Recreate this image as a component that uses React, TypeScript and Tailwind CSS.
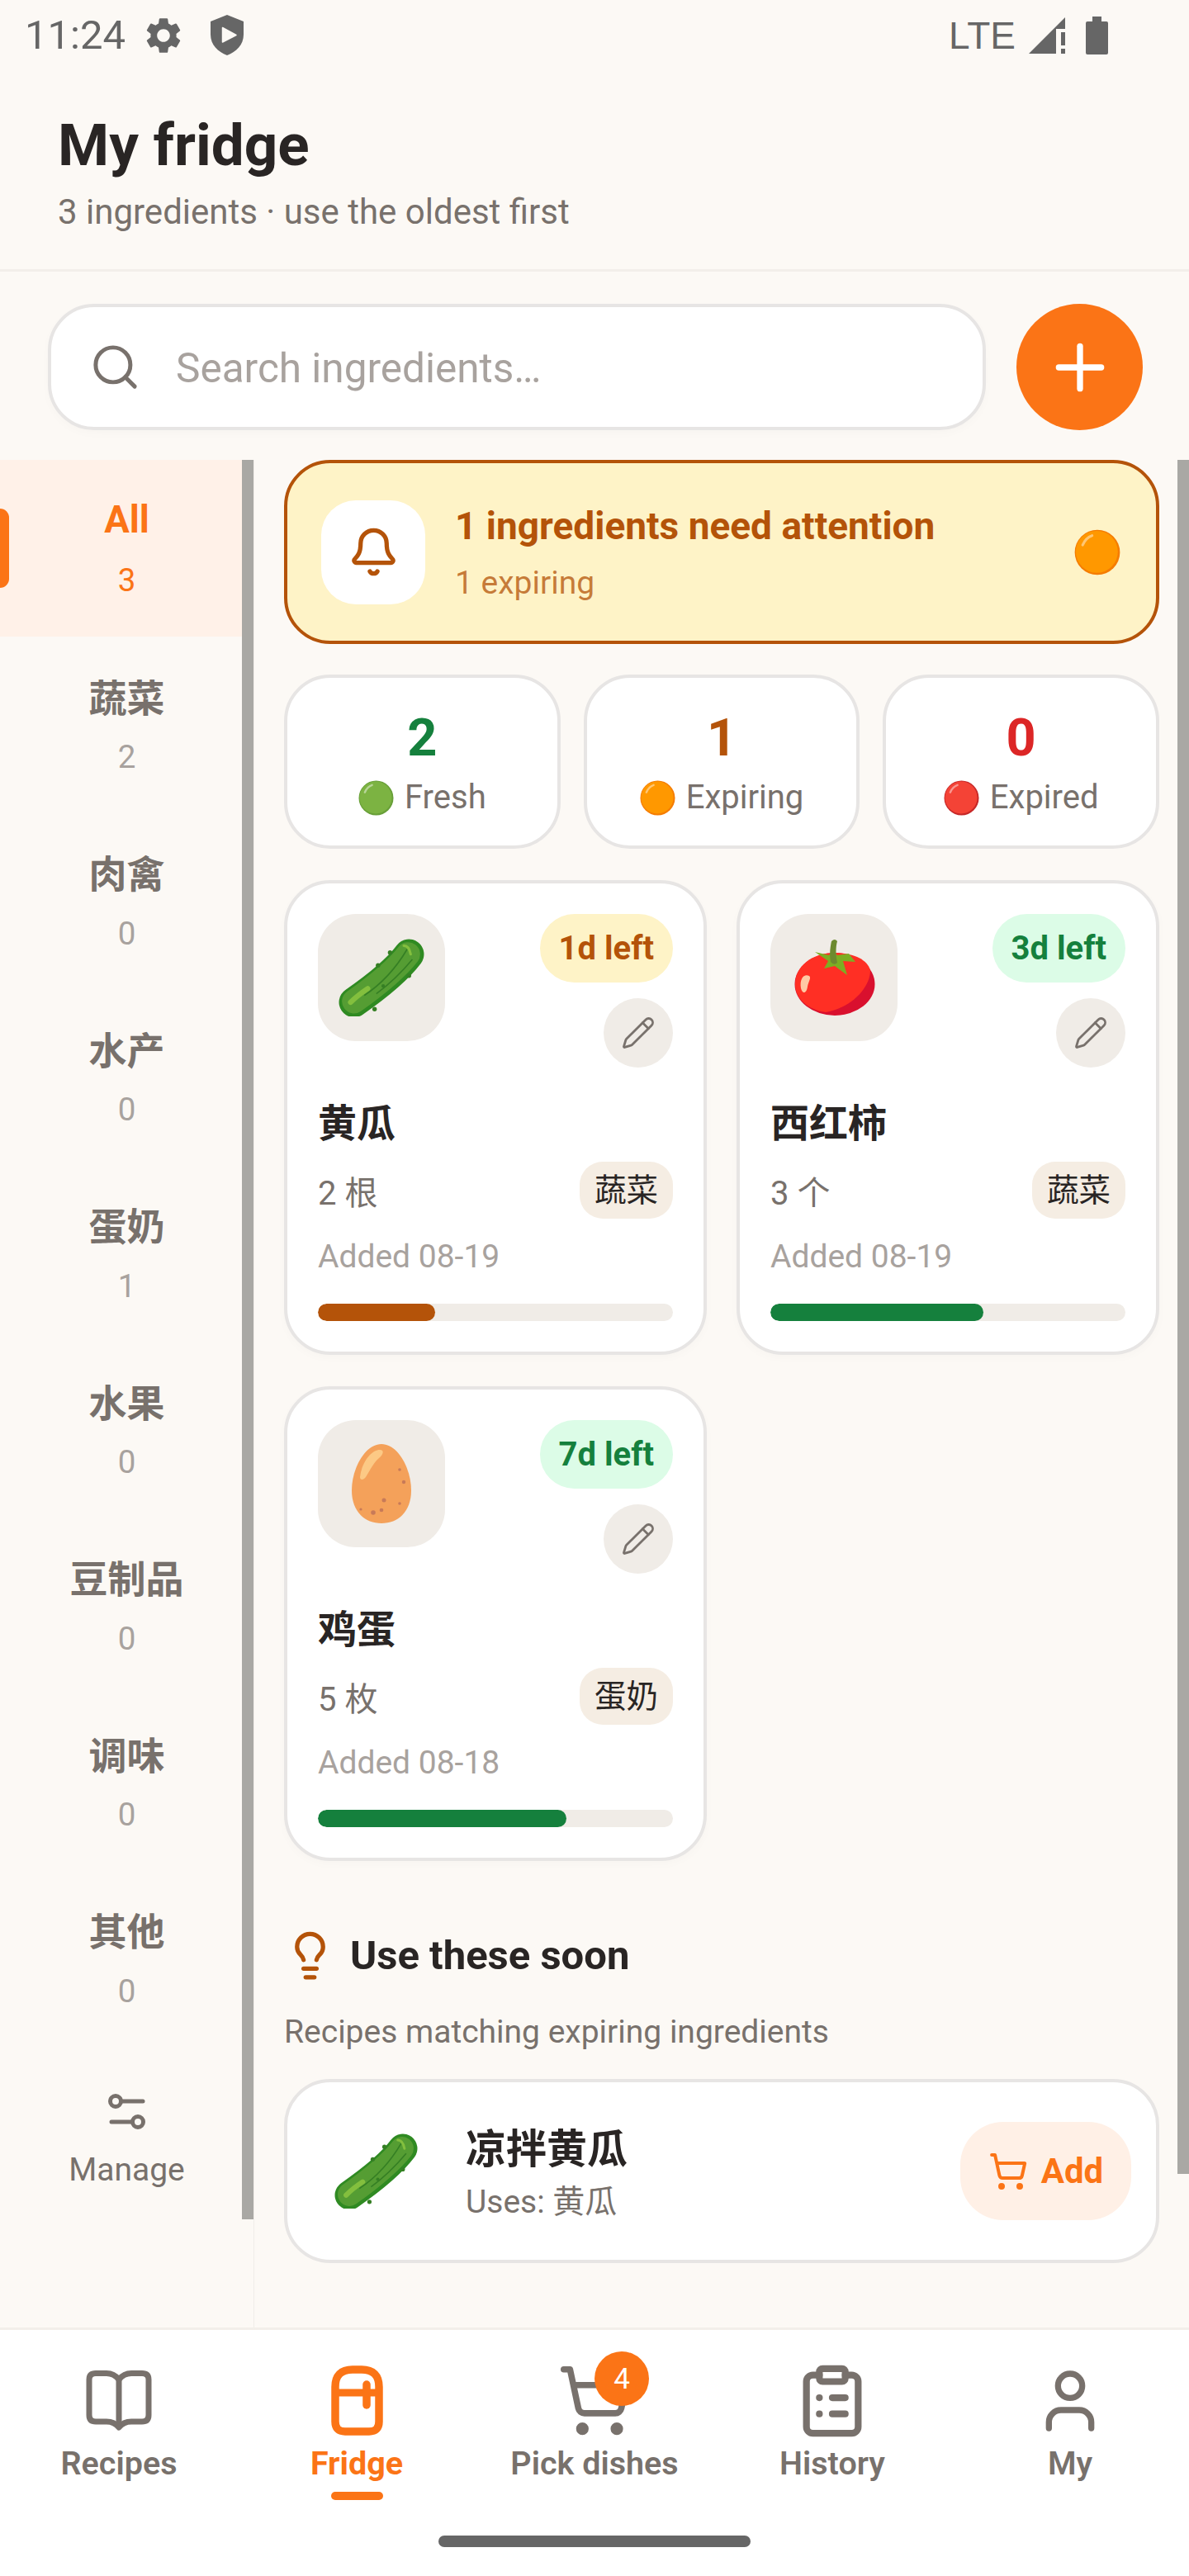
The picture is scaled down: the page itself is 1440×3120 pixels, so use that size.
import React from "react";
import { Search, Plus, Bell, Pencil, Lightbulb, ShoppingCart, ClipboardList, User } from "lucide-react";

const Dot = ({ c, rim, size }: { c: string; rim: string; size: number }) => (
  <svg width={size} height={size} viewBox="0 0 44 44" className="shrink-0">
    <circle cx="22" cy="22" r="21.5" fill={rim} />
    <circle cx="21.5" cy="21.5" r="20" fill={c} />
    <path d="M8 15 Q11 8 17 6" stroke="#ffffff" strokeOpacity="0.45" strokeWidth="2.5" fill="none" strokeLinecap="round" />
  </svg>
);

const Cucumber = ({ w }: { w: number }) => (
  <svg width={w} height={w * 0.91} viewBox="0 0 100 91">
    <path d="M18 74 Q64 42 82 18" stroke="#2f8a22" strokeWidth="35" strokeLinecap="round" fill="none" />
    <path d="M18 73 Q63 41 81 18" stroke="#559d33" strokeWidth="28" strokeLinecap="round" fill="none" />
    <path d="M30 66 Q60 46 80 12" stroke="#357f24" strokeWidth="1.6" fill="none" />
    <path d="M44 64 Q66 48 86 24" stroke="#357f24" strokeWidth="1.6" fill="none" />
    <path d="M14 74 Q22 66 34 58" stroke="#83bf3e" strokeWidth="6" strokeLinecap="round" fill="none" />
    <path d="M76 8 Q82 8 84 18" stroke="#83bf3e" strokeWidth="3" strokeLinecap="round" fill="none" />
    <circle cx="60" cy="16" r="2.6" fill="#357f24" />
    <circle cx="46" cy="31" r="2.6" fill="#357f24" />
    <circle cx="82" cy="43" r="2.6" fill="#357f24" />
    <circle cx="42" cy="82" r="2.6" fill="#357f24" />
    <circle cx="52" cy="55" r="2" fill="#357f24" />
  </svg>
);

const Tomato = () => (
  <svg width="98" height="94" viewBox="0 0 98 94" className="ml-[2px]">
    <ellipse cx="49" cy="55" rx="48.5" ry="38" fill="#d9102e" />
    <path d="M1 55 C1 33 22 17 49 17 C70 17 88 24 92 38 C92 60 68 84 38 89 C16 86 1 72 1 55 Z" fill="#ff2f24" />
    <path d="M8 60 C6 48 12 42 18 45 C21 47 17 52 16 58 C15 66 10 68 8 60 Z" fill="#ffc9a4" />
    <path d="M25 16 L42 20 L46 14 L52 20 L66 18 L74 28 L59 27 L64 44 L49 33 L36 36 L41 27 Z" fill="#7cae23" />
    <path d="M44 28 C42 18 44 8 45 3 Q49 -1 52 3 C50 10 50 20 52 29 Q48 33 44 28 Z" fill="#6d8a2f" />
  </svg>
);

const Egg = () => (
  <svg width="72" height="96" viewBox="0 0 72 96">
    <path d="M36 0 C56 0 72 30 72 56 C72 82 56 96 36 96 C16 96 0 82 0 56 C0 30 16 0 36 0 Z" fill="#f4a15a" />
    <path d="M10 40 C12 22 24 7 34 7 C40 7 38 13 33 17 C26 23 22 32 17 40 C14 44 10 44 10 40 Z" fill="#fcc985" />
    <g fill="#c87a58">
      <circle cx="58" cy="31" r="1.8" />
      <circle cx="63" cy="46" r="2.2" />
      <circle cx="39" cy="68" r="2.5" />
      <circle cx="58" cy="72" r="1.8" />
      <circle cx="36" cy="80" r="2.3" />
      <circle cx="26" cy="83" r="2.8" />
      <circle cx="11" cy="79" r="1.6" />
    </g>
  </svg>
);

const Cards = [
  { icon: <Cucumber w={104} />, left: "1d left", badge: "bg-[#fef3c7] text-[#b45309]", name: "黄瓜", qty: "2 根", tag: "蔬菜", date: "Added 08-19", bar: "w-[33%] bg-[#b45309]" },
  { icon: <Tomato />, left: "3d left", badge: "bg-[#dcfce7] text-[#15803d]", name: "西红柿", qty: "3 个", tag: "蔬菜", date: "Added 08-19", bar: "w-[60%] bg-[#15803d]" },
  { icon: <Egg />, left: "7d left", badge: "bg-[#dcfce7] text-[#15803d]", name: "鸡蛋", qty: "5 枚", tag: "蛋奶", date: "Added 08-18", bar: "w-[70%] bg-[#15803d]" },
];

const cats: [string, number][] = [
  ["蔬菜", 2], ["肉禽", 0], ["水产", 0], ["蛋奶", 1], ["水果", 0], ["豆制品", 0], ["调味", 0], ["其他", 0],
];

function FoodCard({ c }: { c: (typeof Cards)[number] }) {
  return (
    <div className="h-[575px] rounded-[56px] border-[4px] border-[#e7e5e4] bg-white px-[37px] pt-[37px] shadow-[0_4px_12px_rgba(0,0,0,0.02)]">
      <div className="flex justify-between">
        <div className="flex h-[154px] w-[154px] items-center justify-center rounded-[46px] bg-[#f0ece7]">{c.icon}</div>
        <div className="flex flex-col items-end">
          <div className={`flex h-[83px] items-center rounded-full px-[23px] text-[40px] font-bold ${c.badge}`}>{c.left}</div>
          <div className="mt-[19px] flex h-[84px] w-[84px] items-center justify-center rounded-full bg-[#f0ece7]">
            <Pencil size={42} strokeWidth={1.6} color="#78716c" />
          </div>
        </div>
      </div>
      <div className="mt-[32px] flex h-[70px] items-center text-[47px] font-bold leading-none text-[#292524]">{c.name}</div>
      <div className="mt-[12px] flex h-[69px] items-center justify-between">
        <span className="pt-[8px] text-[40px] text-[#78716c]">{c.qty}</span>
        <span className="flex h-[69px] items-center rounded-[28px] bg-[#f5ede3] px-[18px] text-[38.5px] text-[#292524]">{c.tag}</span>
      </div>
      <div className="mt-[21px] flex h-[50px] items-center text-[39px] text-[#a8a29e]">{c.date}</div>
      <div className="mt-[32px] h-[21px] overflow-hidden rounded-full bg-[#f0ece7]">
        <div className={`h-full rounded-full ${c.bar}`} />
      </div>
    </div>
  );
}

function Stat({ n, color, dot, rim, label }: { n: string; color: string; dot: string; rim: string; label: string }) {
  return (
    <div className="flex h-[211px] flex-col items-center rounded-[56px] border-[4px] border-[#e7e5e4] bg-white pt-[37px]">
      <div className={`flex h-[70px] items-center text-[63px] font-bold leading-none ${color}`}>{n}</div>
      <div className="mt-[10px] flex h-[56px] items-center gap-[13px] text-[40px] text-[#78716c]">
        <Dot c={dot} rim={rim} size={43} />
        <span>{label}</span>
      </div>
    </div>
  );
}

function NavItem({ label, active, children }: { label: string; active?: boolean; children: React.ReactNode }) {
  return (
    <div className="flex flex-col items-center">
      <div className="relative flex h-[95px] w-full items-center justify-center">{children}</div>
      <div className={`mt-[4px] flex h-[50px] items-center text-[39.5px] ${active ? "font-bold text-[#fb7416]" : "font-semibold text-[#78716c]"}`}>{label}</div>
      {active && <div className="mt-[9px] h-[10px] w-[63px] rounded-full bg-[#fb7416]" />}
    </div>
  );
}

export default function App() {
  return (
    <div
      className="flex h-[3120px] w-[1440px] flex-col overflow-hidden bg-[#fcf9f5] text-[#292524]"
      style={{ fontFamily: 'Roboto, "Noto Sans CJK SC", sans-serif' }}
    >
      {/* status bar */}
      <div className="flex h-[85px] shrink-0 items-center justify-between pl-[30px] pr-[98px] text-[#666666]">
        <div className="flex items-center">
          <span className="text-[49px] leading-none">11:24</span>
          <svg width="52" height="52" viewBox="0 0 24 24" className="ml-[20px]" fill="#666666">
            <path d="M19.14 12.94c.04-.3.06-.61.06-.94 0-.32-.02-.64-.07-.94l2.03-1.58c.18-.14.23-.41.12-.61l-1.92-3.32c-.12-.22-.37-.29-.59-.22l-2.39.96c-.5-.38-1.03-.7-1.62-.94l-.36-2.54c-.04-.24-.24-.41-.48-.41h-3.84c-.24 0-.43.17-.47.41l-.36 2.54c-.59.24-1.13.57-1.62.94l-2.39-.96c-.22-.08-.47 0-.59.22L2.74 8.87c-.12.21-.08.47.12.61l2.03 1.58c-.05.3-.09.63-.09.94s.02.64.07.94l-2.03 1.58c-.18.14-.23.41-.12.61l1.92 3.32c.12.22.37.29.59.22l2.39-.96c.5.38 1.03.7 1.62.94l.36 2.54c.05.24.24.41.48.41h3.84c.24 0 .44-.17.47-.41l.36-2.54c.59-.24 1.13-.56 1.62-.94l2.39.96c.22.08.47 0 .59-.22l1.92-3.32c.12-.22.07-.47-.12-.61l-2.01-1.58zM12 15.6c-1.98 0-3.6-1.62-3.6-3.6s1.62-3.6 3.6-3.6 3.6 1.62 3.6 3.6-1.62 3.6-3.6 3.6z" />
          </svg>
          <svg width="40" height="49" viewBox="0 0 40 49" className="ml-[31px]">
            <path d="M20 0 L40 8 V24 C40 36 31 45 20 49 C9 45 0 36 0 24 V8 Z" fill="#666666" />
            <path d="M14.5 15.5 V33 L31 24.5 Z" fill="#fcf9f5" stroke="#fcf9f5" strokeWidth="1.5" strokeLinejoin="round" />
          </svg>
        </div>
        <div className="flex items-center">
          <span className="text-[46px] leading-none" style={{ fontFamily: '"Liberation Sans", sans-serif' }}>LTE</span>
          <svg width="44" height="44" viewBox="0 0 44 44" className="ml-[16px]">
            <path d="M0 44 L44 0 V14 H33 V44 Z" fill="#666666" />
            <rect x="39" y="18" width="5" height="16" fill="#666666" />
            <rect x="39" y="38" width="5" height="6" fill="#666666" />
          </svg>
          <svg width="27" height="46" viewBox="0 0 27 46" className="ml-[25px]">
            <path d="M8 0 H19 V6 H25 Q27 6 27 8 V44 Q27 46 25 46 H2 Q0 46 0 44 V8 Q0 6 2 6 H8 Z" fill="#666666" />
          </svg>
        </div>
      </div>

      {/* header */}
      <div className="h-[244px] shrink-0 border-b-[3px] border-[#f3efea] pl-[70px]">
        <h1 className="mt-[48px] flex h-[84px] items-center text-[71px] font-bold leading-none text-[#292524]">My fridge</h1>
        <p className="mt-[10px] flex h-[60px] items-center text-[42px] leading-none text-[#78716c]">3 ingredients · use the oldest first</p>
      </div>

      {/* search */}
      <div className="flex shrink-0 items-center pl-[58px] pr-[56px] pb-[36px] pt-[39px]">
        <div className="flex h-[153px] flex-1 items-center rounded-[56px] border-[4px] border-[#e7e5e4] bg-white pl-[46px] shadow-[0_4px_12px_rgba(0,0,0,0.02)]">
          <Search size={63} strokeWidth={1.9} color="#78716c" />
          <span className="ml-[42px] pt-[4px] text-[49.5px] text-[#a8a29e]">Search ingredients…</span>
        </div>
        <div className="ml-[37px] flex h-[153px] w-[153px] items-center justify-center rounded-full bg-[#fb7416]">
          <Plus size={88} strokeWidth={2} color="#ffffff" />
        </div>
      </div>

      {/* body */}
      <div className="flex min-h-0 flex-1">
        <div className="relative w-[308px] shrink-0 border-r-[1px] border-[#f0ede9]">
          <div className="relative flex h-[213.5px] flex-col items-center bg-[#fff1e8] pt-[38px]">
            <div className="absolute left-0 top-[59px] h-[96px] w-[11px] rounded-r-full bg-[#fb7416]" />
            <div className="flex h-[70px] items-center text-[45.5px] font-bold leading-none text-[#fb7416]">All</div>
            <div className="mt-[12px] flex h-[52px] items-center text-[38.5px] leading-none text-[#fb7416]">3</div>
          </div>
          {cats.map(([n, c]) => (
            <div key={n} className="flex h-[213.5px] flex-col items-center pt-[40px]">
              <div className="flex h-[70px] items-center text-[46px] font-semibold leading-none text-[#78716c]">{n}</div>
              <div className="mt-[11px] flex h-[52px] items-center text-[38.5px] leading-none text-[#a8a29e]">{c}</div>
            </div>
          ))}
          <div className="flex flex-col items-center pt-[56px]">
            <svg width="46" height="46" viewBox="0 0 46 46" fill="none" stroke="#78716c" strokeWidth="5" strokeLinecap="round">
              <circle cx="9" cy="10" r="6.5" />
              <path d="M16 10 H42" />
              <circle cx="36" cy="35" r="6.5" />
              <path d="M4 35 H29" />
            </svg>
            <div className="mt-[28px] text-[39px] leading-none text-[#78716c]">Manage</div>
          </div>
          <div className="absolute right-0 top-0 h-[2131px] w-[14px] bg-[#a9a8a4]" />
        </div>

        <div className="w-[1096px] shrink-0 pl-[36px]">
          <div className="flex h-[223px] items-center rounded-[56px] border-[4px] border-[#b45309] bg-[#fef3c7] pl-[41px] pr-[43px]">
            <div className="flex h-[126px] w-[126px] shrink-0 items-center justify-center rounded-[42px] bg-white">
              <Bell size={63} strokeWidth={2} color="#b45309" />
            </div>
            <div className="ml-[36px] flex-1">
              <div className="flex h-[68px] items-center text-[46px] font-bold leading-none text-[#b45309]">1 ingredients need attention</div>
              <div className="mt-[7px] flex h-[56px] items-center text-[39px] leading-none text-[#b45309]/75">1 expiring</div>
            </div>
            <Dot c="#ff9800" rim="#f57c00" size={56} />
          </div>

          <div className="mt-[37px] grid grid-cols-3 gap-[28px]">
            <Stat n="2" color="text-[#15803d]" dot="#7cb342" rim="#689f38" label="Fresh" />
            <Stat n="1" color="text-[#b45309]" dot="#ff9800" rim="#f57c00" label="Expiring" />
            <Stat n="0" color="text-[#dc2626]" dot="#f44336" rim="#c62828" label="Expired" />
          </div>

          <div className="mt-[38px] grid grid-cols-2 gap-x-[36px] gap-y-[38px]">
            {Cards.map((c) => (
              <FoodCard key={c.name} c={c} />
            ))}
          </div>

          <div className="mt-[83px] flex h-[63px] items-center">
            <Lightbulb size={63} strokeWidth={2} color="#b45309" />
            <span className="ml-[17px] text-[49px] font-bold leading-none text-[#292524]">Use these soon</span>
          </div>
          <div className="mt-[33px] flex h-[56px] items-center text-[39px] leading-none text-[#78716c]">Recipes matching expiring ingredients</div>

          <div className="mt-[29px] flex h-[223px] items-center rounded-[56px] border-[4px] border-[#e7e5e4] bg-white pl-[57px] pr-[30px]">
            <Cucumber w={101} />
            <div className="ml-[58px] flex-1 pt-[6px]">
              <div className="flex h-[66px] items-center text-[49px] font-bold leading-none text-[#292524]">凉拌黄瓜</div>
              <div className="mt-[3px] flex h-[56px] items-center text-[39px] leading-none text-[#78716c]">Uses: 黄瓜</div>
            </div>
            <div className="flex h-[119px] w-[207px] items-center justify-center gap-[16px] rounded-[52px] bg-[#fff0e6]">
              <ShoppingCart size={48} strokeWidth={2} color="#fb7416" />
              <span className="text-[42px] font-bold leading-none text-[#fb7416]">Add</span>
            </div>
          </div>
        </div>

        <div className="ml-[22px] h-[2076px] w-[14px] shrink-0 bg-[#a9a8a4]" />
      </div>

      {/* bottom nav */}
      <div className="h-[301px] shrink-0 border-t-[3px] border-[#f3efea] bg-white">
        <div className="grid h-[205px] grid-cols-5 pt-[38px]">
          <NavItem label="Recipes">
            <svg width="80" height="73" viewBox="0 0 80 73" fill="none" stroke="#78716c" strokeWidth="7" strokeLinejoin="round">
              <path d="M40 11 C36 6 31 3.500 25 3.500 H12 Q4 3.500 4 11 V54 Q4 62 12 62 H25 C31 62 36 64 40 69 C44 64 49 62 55 62 H68 Q76 62 76 54 V11 Q76 3.500 68 3.500 H55 C49 3.500 44 6 40 11 Z" />
              <path d="M40 11 V68" />
            </svg>
          </NavItem>
          <NavItem label="Fridge" active>
            <svg width="63" height="85" viewBox="0 0 63 85" fill="none" stroke="#fb7416">
              <path d="M5 26 Q5 5 26 5 H37 Q58 5 58 26 V68 Q58 80 46 80 H17 Q5 80 5 68 Z" strokeWidth="9.500" />
              <path d="M5 33 H58" strokeWidth="9" />
              <path d="M43 23 V48" strokeWidth="9.500" strokeLinecap="round" />
            </svg>
          </NavItem>
          <NavItem label="Pick dishes">
            <ShoppingCart size={91} strokeWidth={2} color="#78716c" />
            <div className="absolute left-[144px] top-[-12px] flex h-[66px] w-[66px] items-center justify-center rounded-full bg-[#fb7416] text-[35px] leading-none text-white">4</div>
          </NavItem>
          <NavItem label="History">
            <ClipboardList size={94} strokeWidth={2.1} color="#78716c" />
          </NavItem>
          <NavItem label="My">
            <User size={88} strokeWidth={2} color="#78716c" />
          </NavItem>
        </div>
        <div className="mt-[44px] flex justify-center">
          <div className="h-[14px] w-[378px] rounded-full bg-[#666666]" />
        </div>
      </div>
    </div>
  );
}
